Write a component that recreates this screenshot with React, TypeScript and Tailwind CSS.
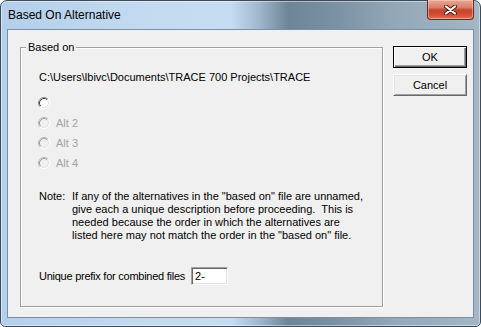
import React from "react";

const dlgFont = { fontFamily: '"Liberation Sans", Arial, sans-serif' };

function Radio({ enabled }: { enabled: boolean }) {
  // classic 3D radio: dark upper-left arcs, light lower-right arcs
  return (
    <svg width="12" height="12" viewBox="0 0 12 12" className="shrink-0">
      <circle cx="6" cy="6" r="4.5" fill={enabled ? "#ffffff" : "#f0f0f0"} />
      <path d="M2.11 9.89 A5.5 5.5 0 0 1 9.89 2.11" fill="none" stroke={enabled ? "#8a8a8a" : "#b4b4b4"} strokeWidth="1" />
      <path d="M9.89 2.11 A5.5 5.5 0 0 1 2.11 9.89" fill="none" stroke="#ffffff" strokeWidth="1" />
      <path d="M2.82 9.18 A4.5 4.5 0 0 1 9.18 2.82" fill="none" stroke={enabled ? "#404040" : "#a0a0a0"} strokeWidth="1" />
      <path d="M9.18 2.82 A4.5 4.5 0 0 1 2.82 9.18" fill="none" stroke="#e3e3e3" strokeWidth="1" />
    </svg>
  );
}

function CloseButton() {
  return (
    <button className="-mt-px flex h-[20px] w-[47px] items-center justify-center rounded-b-[4px] border border-t-0 border-[#6b2b20] bg-[linear-gradient(180deg,#e9a896_0%,#d77e69_40%,#c5452e_52%,#cf4a30_75%,#e5735a_100%)] shadow-[inset_0_0_0_1px_rgba(255,220,210,0.45)]">
      <svg width="13" height="10" viewBox="0 0 13 10">
        <path d="M2 1.5 L11 8.5 M11 1.5 L2 8.5" stroke="#4a1a12" strokeWidth="4" strokeLinecap="round" />
        <path d="M2 1.5 L11 8.5 M11 1.5 L2 8.5" stroke="#ffffff" strokeWidth="2.2" strokeLinecap="round" />
      </svg>
    </button>
  );
}

export default function App() {
  const alts = ["", "Alt 2", "Alt 3", "Alt 4"];

  return (
    <div className="h-[327px] w-[481px] bg-white">
      <div className="flex h-full flex-col rounded-t-[7px] rounded-b-[5px] border border-[#3d4c5b] bg-[linear-gradient(90deg,#b3cfea_0%,#c3daf1_30%,#c6dcf2_48%,#9fb6cb_54%,#6e8597_60%,#7b92a4_70%,#93a7b7_82%,#a5b7c5_100%)] px-[6px] pb-[8px] shadow-[inset_0_0_0_1px_rgba(255,255,255,0.45)]">
        {/* Title bar */}
        <div className="flex h-[28px] items-start justify-between">
          <span
            className="ml-[1px] mt-[7px] text-[12px] leading-[14px] text-black"
            style={dlgFont}
          >
            Based On Alternative
          </span>
          <CloseButton />
        </div>

        {/* Client area */}
        <div className="flex flex-1 border border-[#7b8fa2] bg-[#f0f0f0] text-[11px] leading-[13px] text-black" style={dlgFont}>
          <fieldset className="ml-[12px] mt-[11px] h-[266px] w-[363px] border border-[#a0a0a0] p-0 shadow-[inset_1px_1px_0_#ffffff,1px_1px_0_#ffffff]">
            <legend className="ml-[5px] bg-[#f0f0f0] px-[2px] leading-[13px]">Based on</legend>

            <div className="pl-[18px]">
              <div className="mt-[17px]">C:\Users\lbivc\Documents\TRACE 700 Projects\TRACE</div>

              <div className="mt-[9px] flex flex-col">
                {alts.map((a, i) => (
                  <div key={i} className="-ml-px flex h-[20px] items-center gap-[6px]">
                    <Radio enabled={i === 0} />
                    <span className="text-[#a3a3a3]">{a}</span>
                  </div>
                ))}
              </div>

              <div className="mt-[17px] flex">
                <span className="w-[33px] shrink-0">Note:</span>
                <p className="whitespace-pre">
                  {'If any of the alternatives in the "based on" file are unnamed,'}
                  <br />
                  {"give each a unique description before proceeding.  This is"}
                  <br />
                  {"needed because the order in which the alternatives are"}
                  <br />
                  {'listed here may not match the order in the "based on" file.'}
                </p>
              </div>

              <div className="mt-[25px] flex items-center gap-[6px]">
                <span className="tracking-[-0.25px]">Unique prefix for combined files</span>
                <div className="flex h-[18px] w-[37px] items-center border border-t-[#a0a0a0] border-l-[#a0a0a0] border-r-white border-b-white bg-white pl-[3px] shadow-[inset_1px_1px_0_#696969,inset_-1px_-1px_0_#e3e3e3]">
                  2-
                </div>
              </div>
            </div>
          </fieldset>

          <div className="ml-auto mr-[6px] mt-[16px] flex flex-col gap-[6px]">
            <button className="h-[22px] w-[74px] border border-black bg-[#f0f0f0] shadow-[inset_1px_1px_0_#ffffff,inset_-1px_-1px_0_#696969,inset_-2px_-2px_0_#a0a0a0]">
              OK
            </button>
            <button className="h-[22px] w-[74px] border border-t-white border-l-white border-r-[#696969] border-b-[#696969] bg-[#f0f0f0] shadow-[inset_1px_1px_0_#e3e3e3,inset_-1px_-1px_0_#a0a0a0]">
              Cancel
            </button>
          </div>
        </div>
      </div>
    </div>
  );
}
